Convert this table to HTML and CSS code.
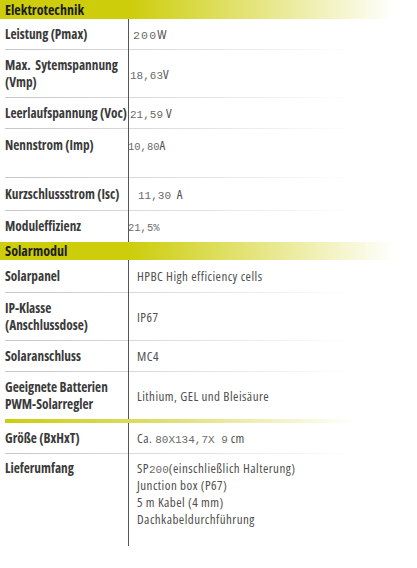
FILE: index.html
```html
<!DOCTYPE html>
<html lang="de">
<head>
    <meta charset="UTF-8">
    <meta name="viewport" content="width=device-width, initial-scale=1.0">
    <title>Technische Daten</title>
    <link rel="stylesheet" href="styles.css">
</head>
<body>

<div class="specs">
    <h2 class="section">Elektrotechnik</h2>
    <div class="row">
        <div class="label">Leistung (Pmax)</div>
        <div class="value pad-4"><span class="num wide">200</span>W</div>
    </div>
    <div class="row">
        <div class="label">Max.&nbsp; Sytemspannung<br>(Vmp)</div>
        <div class="value pad-2"><span class="num">18,63</span>V</div>
    </div>
    <div class="row">
        <div class="label">Leerlaufspannung (Voc)</div>
        <div class="value pad-2"><span class="num">21,59</span>&nbsp;V</div>
    </div>
    <div class="row row-top">
        <div class="label">Nennstrom (Imp)</div>
        <div class="value pad-0"><span class="num small">10,80</span>A</div>
    </div>
    <div class="row row-wide">
        <div class="label">Kurzschlussstrom (Isc)</div>
        <div class="value pad-10"><span class="num">11,30</span>&nbsp; A</div>
    </div>
    <div class="row row-last">
        <div class="label">Moduleffizienz</div>
        <div class="value pad-0"><span class="num small">21,5%</span></div>
    </div>

    <h2 class="section section-low">Solarmodul</h2>
    <div class="row row-wide">
        <div class="label">Solarpanel</div>
        <div class="value">HPBC High efficiency cells</div>
    </div>
    <div class="row">
        <div class="label">IP-Klasse<br>(Anschlussdose)</div>
        <div class="value">IP67</div>
    </div>
    <div class="row">
        <div class="label">Solaranschluss</div>
        <div class="value">MC4</div>
    </div>
    <div class="row row-accent">
        <div class="label">Geeignete Batterien<br>PWM-Solarregler</div>
        <div class="value">Lithium, GEL und Bleisäure</div>
    </div>
    <div class="row">
        <div class="label">Größe (BxHxT)</div>
        <div class="value">Ca. <span class="num">80X134,7X 9</span> cm</div>
    </div>
    <div class="row row-top row-end">
        <div class="label">Lieferumfang</div>
        <div class="value">SP<span class="num">200</span>(einschließlich Halterung)<br>Junction box (P67)<br>5 m Kabel (4 mm)<br>Dachkabeldurchführung</div>
    </div>
</div>

</body>
</html>
```

FILE: styles.css
```css
body {
    margin: 0;
    font-family: "Open Sans", "DejaVu Sans Condensed", sans-serif;
    font-stretch: 75%;
    background-color: #fff;
    color: #555;
}
.specs {
    width: 417px;
}
.section {
    margin: 0;
    height: 19px;
    line-height: 19px;
    padding-left: 5px;
    font-size: 14px;
    font-weight: bold;
    color: #1c1c1c;
    background: linear-gradient(to right, #cdcd0c 130px, #fff 395px);
}
.section-low {
    height: 18px;
    line-height: 18px;
}
.row {
    display: grid;
    grid-template-columns: 123px 1fr;
    align-items: center;
    box-sizing: border-box;
    min-height: 31px;
    margin-left: 5px;
    padding: 7px 0;
    font-size: 13px;
    line-height: 17px;
    white-space: nowrap;
    background:
        linear-gradient(#555, #555) 123px 0 / 1px 100% no-repeat,
        linear-gradient(to right, #c6c6c6, #e2e2e2 55%, #fff) left bottom / 350px 1px no-repeat;
}
.row-wide {
    min-height: 33px;
}
.row-top {
    align-items: start;
    padding-top: 8px;
    min-height: 49px;
}
.row-last {
    background: linear-gradient(#555, #555) 123px 0 / 1px 100% no-repeat;
}
.row-accent {
    padding-bottom: 10px;
    background:
        linear-gradient(to right, #cdcd0c, #dede70 45%, #fff) left bottom / 350px 4px no-repeat,
        linear-gradient(#555, #555) 123px 0 / 1px 100% no-repeat;
}
.row-end {
    padding-top: 6px;
    padding-bottom: 18px;
    background: linear-gradient(#555, #555) 123px 0 / 1px 100% no-repeat;
}
.label {
    font-size: 13.3px;
    font-weight: bold;
    color: #3a3a3a;
}
.value {
    padding-left: 9px;
    font-size: 13px;
    letter-spacing: 0.45px;
    color: #4f4f4f;
}
.pad-0 {
    padding-left: 0;
}
.pad-2 {
    padding-left: 2px;
}
.pad-4 {
    padding-left: 5px;
}
.pad-10 {
    padding-left: 10px;
}
.num {
    font-family: "Liberation Mono", monospace;
    font-size: 11px;
    line-height: 10px;
    letter-spacing: 0;
    color: #6a6a6a;
}
.num.wide {
    font-size: 11.5px;
    letter-spacing: 1.2px;
}
.num.small {
    font-size: 10.5px;
}
```
